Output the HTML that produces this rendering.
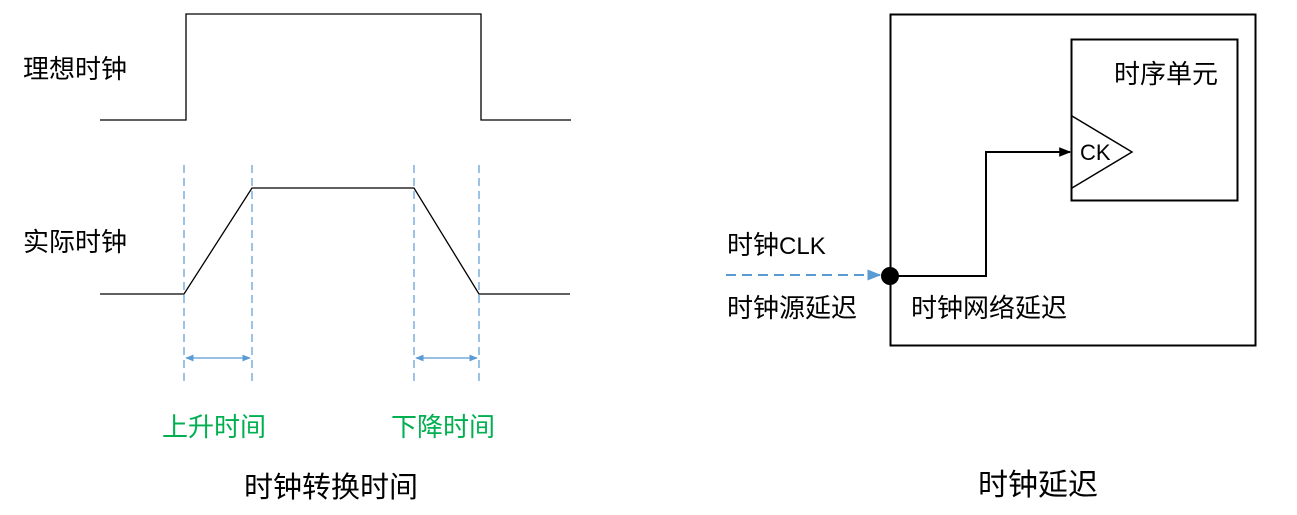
<!DOCTYPE html>
<html><head><meta charset="utf-8"><style>
body{margin:0;background:#fff;}
svg{display:block;}
text{font-family:"Liberation Sans","Noto Sans CJK SC",sans-serif;}
</style></head><body>
<svg width="1297" height="515" viewBox="0 0 1297 515" xmlns="http://www.w3.org/2000/svg">
<defs>
<marker id="ab" viewBox="0 0 10 10" refX="9" refY="5" markerWidth="7" markerHeight="7" orient="auto-start-reverse"><path d="M0 1L10 5L0 9z" fill="#5b9bd5"/></marker>
<marker id="ak" viewBox="0 0 10 10" refX="9" refY="5" markerWidth="6" markerHeight="6" orient="auto"><path d="M0 1L10 5L0 9z" fill="#000"/></marker>
</defs>
<g fill="none" stroke="#000" stroke-width="1.3">
<path d="M100 120H186V14H481V120H571"/>
<path d="M100 294H184L252 188H414L479 294H570"/>
</g>
<g stroke="#5b9bd5" stroke-width="1.2" stroke-dasharray="8,5">
<line x1="184" y1="165" x2="184" y2="382"/>
<line x1="252" y1="165" x2="252" y2="382"/>
<line x1="414" y1="165" x2="414" y2="382"/>
<line x1="479" y1="165" x2="479" y2="382"/>
</g>
<g stroke="#5b9bd5" stroke-width="1.2">
<line x1="186" y1="358" x2="250" y2="358" marker-start="url(#ab)" marker-end="url(#ab)"/>
<line x1="416" y1="358" x2="477" y2="358" marker-start="url(#ab)" marker-end="url(#ab)"/>
</g>
<g font-size="26" fill="#000">
<text x="23" y="78">理想时钟</text>
<text x="23" y="251">实际时钟</text>
</g>
<g font-size="26" fill="#00b050">
<text x="162" y="436">上升时间</text>
<text x="391" y="436">下降时间</text>
</g>
<text x="244" y="497" font-size="29">时钟转换时间</text>
<text x="978" y="495" font-size="30">时钟延迟</text>
<rect x="890.5" y="14.5" width="365" height="331" fill="none" stroke="#000" stroke-width="2"/>
<rect x="1071.5" y="39.5" width="166" height="161" fill="none" stroke="#000" stroke-width="2"/>
<path d="M1072 116L1132 152L1072 188" fill="none" stroke="#000" stroke-width="1.5"/>
<text x="1080" y="160" font-size="22">CK</text>
<text x="1114" y="83" font-size="26">时序单元</text>
<path d="M890 276H986V152H1070" fill="none" stroke="#000" stroke-width="2" marker-end="url(#ak)"/>
<line x1="726" y1="275" x2="880" y2="275" stroke="#5b9bd5" stroke-width="2" stroke-dasharray="10,6" marker-end="url(#ab)"/>
<circle cx="890" cy="276" r="9" fill="#000"/>
<g font-size="26">
<text x="727" y="254">时钟<tspan font-size="24">CLK</tspan></text>
<text x="727" y="317">时钟源延迟</text>
<text x="911" y="317">时钟网络延迟</text>
</g>
</svg>
</body></html>
